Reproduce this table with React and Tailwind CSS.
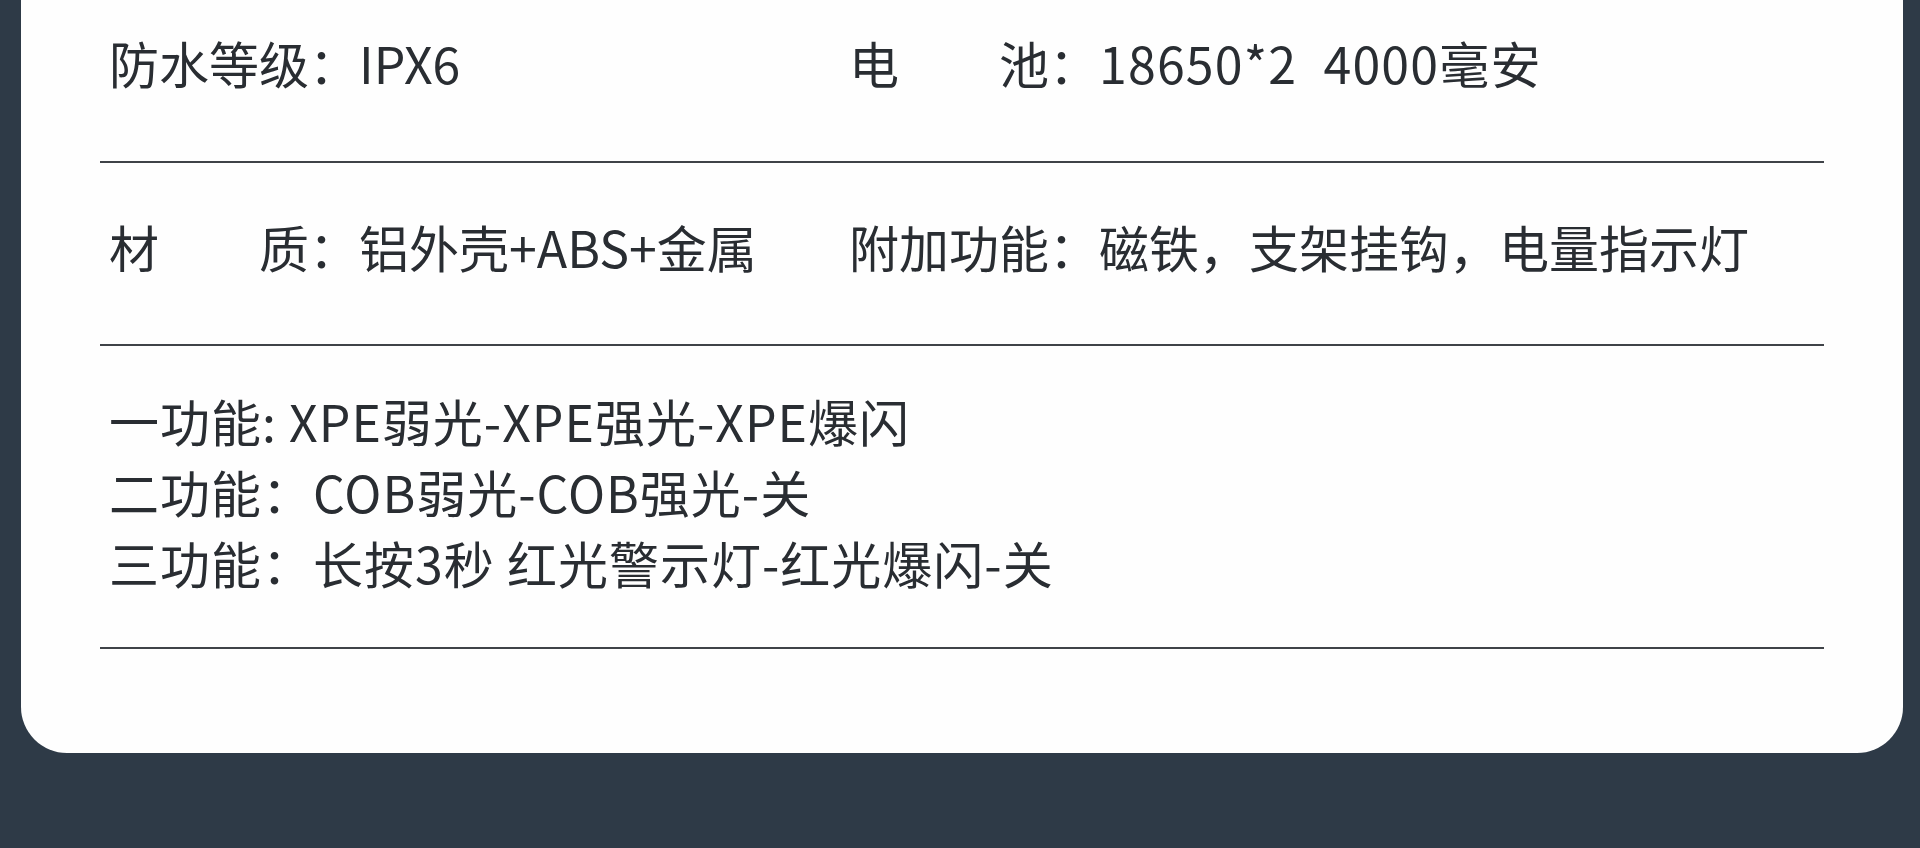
const font = { fontFamily: '"Noto Sans CJK SC", "Noto Sans", sans-serif' };

function Label({ chars }) {
  // spread short labels across the width of four characters
  return (
    <span className="inline-flex justify-between w-[200px]">
      {chars.map((c, i) => (
        <span key={i}>{c}</span>
      ))}
    </span>
  );
}

function Spec({ chars, value, wide }) {
  return (
    <div className="flex whitespace-pre">
      <Label chars={chars} />
      <span>：</span>
      <span className={wide ? "tracking-[1.2px]" : ""}>{value}</span>
    </div>
  );
}

function Rule() {
  return <div className="h-[2px] bg-[#3f4348]" />;
}

export default function App() {
  return (
    <div
      className="w-[1920px] h-[848px] overflow-hidden bg-[#2e3a47] pl-[21px] pr-[17px]"
      style={font}
    >
      <div className="bg-[#fefefe] rounded-b-[46px] h-[753px] px-[79px] text-[#292d32]">
        <div className="grid grid-cols-[740px_1fr] pl-[9px] pt-[32px] pb-[69px] text-[50px] leading-[60px]">
          <Spec chars={["防", "水", "等", "级"]} value="IPX6" />
          <Spec chars={["电", "池"]} value={"18650*2\u20024000毫安"} wide />
        </div>
        <Rule />
        <div className="grid grid-cols-[740px_1fr] pl-[9px] pt-[53px] pb-[68px] text-[50px] leading-[60px]">
          <Spec chars={["材", "质"]} value="铝外壳+ABS+金属" />
          <Spec chars={["附", "加", "功", "能"]} value="磁铁，支架挂钩，电量指示灯" />
        </div>
        <Rule />
        <div className="flex flex-col pl-[9px] pt-[39px] pb-[49px] text-[50px] leading-[71px] tracking-[1px]">
          <p>一功能: XPE弱光-XPE强光-XPE爆闪</p>
          <p>二功能：COB弱光-COB强光-关</p>
          <p>三功能：长按3秒 红光警示灯-红光爆闪-关</p>
        </div>
        <Rule />
      </div>
    </div>
  );
}
